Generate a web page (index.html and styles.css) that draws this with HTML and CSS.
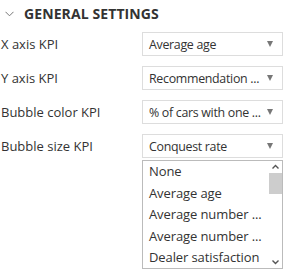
FILE: index.html
```html
<!DOCTYPE html>
<html>
<head>
<meta charset="utf-8">
<link rel="stylesheet" href="styles.css">
</head>
<body>
<div class="panel">
  <div class="header">
    <svg class="chev" width="9" height="6" viewBox="0 0 9 6"><path d="M0.5 0.8 L4.5 4.8 L8.5 0.8" fill="none" stroke="#777" stroke-width="1"/></svg>
    <span class="title">GENERAL SETTINGS</span>
  </div>
  <div class="rows">
    <div class="row"><span class="label">X axis KPI</span><div class="select"><span class="val">Average age</span><span class="arrow"></span></div></div>
    <div class="row"><span class="label">Y axis KPI</span><div class="select"><span class="val">Recommendation ...</span><span class="arrow"></span></div></div>
    <div class="row"><span class="label">Bubble color KPI</span><div class="select"><span class="val">% of cars with one ...</span><span class="arrow"></span></div></div>
    <div class="row"><span class="label">Bubble size KPI</span>
      <div class="combo">
        <div class="select open"><span class="val">Conquest rate</span><span class="arrow"></span></div>
        <div class="list">
          <div class="items">
            <div class="item">None</div>
            <div class="item">Average age</div>
            <div class="item">Average number ...</div>
            <div class="item">Average number ...</div>
            <div class="item">Dealer satisfaction</div>
          </div>
          <div class="scroll">
            <svg class="sarrow" width="13" height="12" viewBox="0 0 13 12"><path d="M3.5 7.5 L6.5 4.5 L9.5 7.5" fill="none" stroke="#555" stroke-width="1.4"/></svg>
            <div class="track"><div class="thumb"></div></div>
            <svg class="sarrow" width="13" height="12" viewBox="0 0 13 12"><path d="M3.5 4.5 L6.5 7.5 L9.5 4.5" fill="none" stroke="#555" stroke-width="1.4"/></svg>
          </div>
        </div>
      </div>
    </div>
  </div>
</div>
</body>
</html>
```
FILE: styles.css
```css
* { box-sizing: border-box; }
html, body { margin: 0; padding: 0; background: #fff; }
body { font-family: "Open Sans", "Liberation Sans", sans-serif; color: #333; }
.panel { width: 292px; }
.header { display: flex; align-items: center; height: 27px; padding-left: 5px; }
.chev { margin-right: 10px; margin-top: 1px; }
.title { font-size: 14px; font-weight: 700; letter-spacing: 0.1px; color: #333; }
.rows { display: flex; flex-direction: column; padding-top: 5px; gap: 10px; }
.row { display: flex; align-items: flex-start; }
.label { width: 142px; font-size: 13px; line-height: 24px; padding-left: 1px; }
.combo { display: flex; flex-direction: column; width: 141px; }
.select { width: 141px; height: 24px; border: 1px solid #ddd; display: flex; align-items: center; padding: 0 0 0 6px; font-size: 12.4px; letter-spacing: -0.3px; }
.select .val { flex: 1; white-space: nowrap; }
.arrow { flex: none; width: 0; height: 0; border-left: 3.5px solid transparent; border-right: 3.5px solid transparent; border-top: 6px solid #777; margin-right: 9px; margin-left: 2px; }
.list { border: 1px solid #bbb; margin-top: 2px; height: 109px; display: flex; }
.items { flex: 1; }
.item { font-size: 13px; height: 21.6px; line-height: 21.6px; padding-left: 6px; white-space: nowrap; letter-spacing: -0.1px; }
.scroll { width: 13px; display: flex; flex-direction: column; background: #fff; }
.sarrow { display: block; flex: none; }
.track { flex: 1; display: flex; flex-direction: column; }
.thumb { height: 21px; background: #cdcdcd; }
```
